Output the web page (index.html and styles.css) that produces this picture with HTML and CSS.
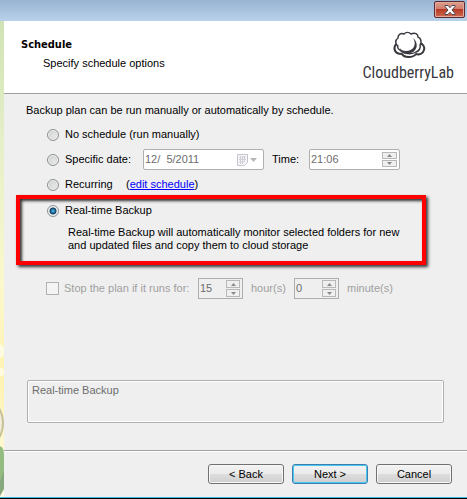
FILE: index.html
```html
<!DOCTYPE html>
<html lang="en">
  <head>
    <meta charset="utf-8" />
    <meta name="viewport" content="width=device-width, initial-scale=1.0" />
    <title>Schedule</title>
    <link rel="stylesheet" href="styles.css">
  </head>
  <body>
    <div class="window">
      <div class="titlebar">
        <button type="button" class="close" aria-label="Close">
          <svg width="12" height="10" viewBox="0 0 12 10">
            <path d="M1 .5h3l2 2.2 2-2.2h3v1L8 5l3 3.500v1H8L6 7.300 4 9.500H1v-1L4 5 1 1.500z" fill="#fff" stroke="#4b4558" stroke-width="1" />
          </svg>
        </button>
      </div>
      <div class="content">
        <svg class="backdrop" width="4" height="475" viewBox="0 0 4 475">
          <circle cx="-2" cy="330" r="7" fill="#fffbe0" />
          <circle cx="-1" cy="351" r="5" fill="#fffbe0" />
          <circle cx="-26" cy="402" r="29" fill="#f2edd6" stroke="#c6c09c" stroke-width="2" />
          <path d="M0 425q4 2 4 8v33l-4 4z" fill="#93bd80" />
          <path d="M0 460l4-10v18l-4 7z" fill="#86a87c" />
        </svg>
        <form class="wizard">
          <header>
            <div class="heading">
              <h1>Schedule</h1>
              <p>Specify schedule options</p>
            </div>
            <div class="logo">
              <svg width="38" height="28" viewBox="0 0 38 28" fill="#fff" stroke="#38383e" stroke-linejoin="round">
                <path d="M9 12c-4 2-5 7-1 10 2 1 4 1 5 1 2 4 11 4 14 0 3 1 7 0 8-4 1-3-1-6-4-7z" stroke-width="2" />
                <path d="M11 19c-2-1-3-3-2-4-3-2-3-6 0-8 0-4 3-5 6-4 2-2 5-2 7 0 4-2 7 0 7 3 3 1 4 5 2 8 1 3-1 6-4 7-3 2-12 3-16-2z" stroke-width="1.500" />
                <path d="M24 7c4 6 1 13-7 13-3 0-5-1-6-3 1 6 12 7 15 2 3-3 2-9-2-12z" fill="#38383e" stroke="none" />
              </svg>
              <span>CloudberryLab</span>
            </div>
          </header>
          <main>
            <p class="intro">Backup plan can be run manually or automatically by schedule.</p>
            <div class="options">
              <div class="row">
                <input type="radio" name="schedule" id="none" />
                <label for="none">No schedule (run manually)</label>
              </div>
              <div class="row">
                <input type="radio" name="schedule" id="specific" />
                <label for="specific" class="date-label">Specific date:</label>
                <div class="field date">
                  <input type="text" value="12/  5/2011" aria-label="Date" disabled />
                  <button type="button" class="picker" aria-label="Open calendar" disabled>
                    <svg width="22" height="14" viewBox="0 0 22 14">
                      <path d="M1.500 1.500h10v8l-3 3h-7z" fill="#f7f7f9" stroke="#c4c4cc" />
                      <path d="M3 4h7M3 6.500h7M3 9h5M4.500 3v8M6.500 3v8M8.500 3v6" stroke="#d0d0d8" />
                      <path d="M14 5h7l-3.500 4z" fill="#b5b5b5" />
                    </svg>
                  </button>
                </div>
                <label for="time" class="time-label">Time:</label>
                <div class="field time">
                  <input type="text" id="time" value="21:06" disabled />
                  <span class="spinner">
                    <button type="button" aria-label="Later" disabled><svg width="5" height="3" viewBox="0 0 5 3"><path d="M0 3h5L2.500 0z" /></svg></button>
                    <button type="button" aria-label="Earlier" disabled><svg width="5" height="3" viewBox="0 0 5 3"><path d="M0 0h5L2.500 3z" /></svg></button>
                  </span>
                </div>
              </div>
              <div class="row">
                <input type="radio" name="schedule" id="recurring" />
                <label for="recurring" class="recurring-label">Recurring</label>
                <span class="edit">(<a href="#">edit schedule</a>)</span>
              </div>
            </div>
            <div class="highlight">
              <div class="row">
                <input type="radio" name="schedule" id="realtime" checked />
                <label for="realtime">Real-time Backup</label>
              </div>
              <p>Real-time Backup will automatically monitor selected folders for new<br>and updated files and copy them to cloud storage</p>
            </div>
            <div class="row stop">
              <input type="checkbox" id="stop" disabled />
              <label for="stop" class="stop-label">Stop the plan if it runs for:</label>
              <div class="field number">
                <input type="text" id="hours" value="15" disabled />
                <span class="spinner">
                  <button type="button" aria-label="More hours" disabled><svg width="5" height="3" viewBox="0 0 5 3"><path d="M0 3h5L2.500 0z" /></svg></button>
                  <button type="button" aria-label="Fewer hours" disabled><svg width="5" height="3" viewBox="0 0 5 3"><path d="M0 0h5L2.500 3z" /></svg></button>
                </span>
              </div>
              <label for="hours" class="hours-label">hour(s)</label>
              <div class="field number">
                <input type="text" id="minutes" value="0" disabled />
                <span class="spinner">
                  <button type="button" aria-label="More minutes" disabled><svg width="5" height="3" viewBox="0 0 5 3"><path d="M0 3h5L2.500 0z" /></svg></button>
                  <button type="button" aria-label="Fewer minutes" disabled><svg width="5" height="3" viewBox="0 0 5 3"><path d="M0 0h5L2.500 3z" /></svg></button>
                </span>
              </div>
              <label for="minutes" class="minutes-label">minute(s)</label>
            </div>
            <textarea class="summary" aria-label="Summary" disabled>Real-time Backup</textarea>
          </main>
          <footer>
            <button type="button">&lt; Back</button>
            <button type="submit" class="default">Next &gt;</button>
            <button type="button">Cancel</button>
          </footer>
        </form>
      </div>
    </div>
  </body>
</html>
```
FILE: styles.css
```css
:root {
  --face: #efefef;
  --line: #a0a0a0;
  --disabled: #6d6d6d;
  --muted: #a0a0a0;
}

* {
  box-sizing: border-box;
}

body {
  margin: 0;
  font-family: Tahoma, "Liberation Sans", sans-serif;
  font-size: 11px;
  line-height: 13px;
  color: #000;
}

h1,
p {
  margin: 0;
}

input,
button,
textarea {
  margin: 0;
  font: inherit;
  color: inherit;
}

.window {
  display: flex;
  flex-direction: column;
  min-height: 100vh;
  border-bottom: 1px solid #000;
}

.titlebar {
  display: flex;
  justify-content: flex-end;
  height: 21px;
  padding: 1px 2px 0 0;
  background: linear-gradient(#98b4d2, #b9d1ea);
}

.close {
  display: flex;
  align-items: center;
  justify-content: center;
  width: 31px;
  height: 17px;
  padding: 0;
  border: 1px solid #5c2a2c;
  border-radius: 2px;
  background: linear-gradient(#dfa08f, #cf7a68 48%, #b73a24 50%, #cd6a50);
  box-shadow: inset 0 0 0 1px #e2aa9c;
}

.content {
  display: flex;
  flex: 1;
  border-bottom: 1px solid #3cb8dc;
  background: linear-gradient(#d0e3b4, #e5efc8 25%, #fbf8cd 55%, #fff3b0 75%, #fffbe8);
}

.backdrop {
  flex: none;
}

.wizard {
  display: flex;
  flex: 1;
  flex-direction: column;
  background: var(--face);
}

header {
  display: flex;
  justify-content: space-between;
  height: 73px;
  padding: 10px 13px 0 17px;
  border-bottom: 1px solid var(--line);
  background: #fff;
}

.heading {
  padding-top: 7px;
}

h1 {
  font-family: Tahoma, "DejaVu Sans Condensed", sans-serif;
  font-size: 11px;
}

.heading p {
  padding: 6px 0 0 22px;
}

.logo {
  display: flex;
  flex-direction: column;
  align-items: center;
  color: #38383e;
  font-family: "Roboto Condensed", Roboto, sans-serif;
  font-size: 16px;
  line-height: 28px;
}

main {
  flex: 1;
  padding: 10px 24px 0 22px;
}

.options {
  display: flex;
  flex-direction: column;
  gap: 4px;
  padding: 7px 0 0 21px;
}

.row {
  display: flex;
  align-items: center;
  height: 21px;
  white-space: nowrap;
}

input[type="radio"] {
  appearance: none;
  flex: none;
  width: 12px;
  height: 12px;
  margin-right: 6px;
  border: 1px solid #8e8f8f;
  border-radius: 50%;
  background: radial-gradient(circle at 60% 60%, #e8e8e8, #c4c7ca);
  box-shadow: inset 0 0 0 1px #f4f4f4;
}

input[type="radio"]:checked {
  background: radial-gradient(circle, #5cc4ee 0, #1b6c9c 2px, #123c5a 3px, #e4e8ea 4px);
}

input[type="checkbox"] {
  appearance: none;
  flex: none;
  width: 13px;
  height: 13px;
  margin-right: 5px;
  border: 1px solid #b1b1b1;
  background: #f4f4f4;
}

.date-label {
  width: 78px;
}

.time-label {
  width: 37px;
  margin-left: 8px;
}

.recurring-label {
  width: 61px;
}

.field {
  display: flex;
  align-items: center;
  height: 21px;
  padding-right: 2px;
  border: 1px solid #afafaf;
  border-radius: 2px;
  background: #fff;
}

.field input {
  flex: 1;
  width: 0;
  min-width: 0;
  padding: 0 0 0 1px;
  border: 0;
  background: none;
  color: var(--disabled);
  white-space: pre;
}

.date {
  width: 121px;
}

.time {
  width: 91px;
}

.number {
  width: 45px;
  border-radius: 0;
  background: var(--face);
}

.picker {
  display: flex;
  padding: 0 3px 0 0;
  border: 0;
  background: none;
}

.spinner {
  display: flex;
  flex-direction: column;
  gap: 1px;
}

.spinner button {
  display: flex;
  align-items: center;
  justify-content: center;
  width: 15px;
  height: 7px;
  padding: 0;
  border: 1px solid #b8b8b8;
  background: var(--face);
}

.number .spinner button {
  width: 14px;
  height: 8px;
}

.spinner path {
  fill: #8a8a8a;
}

.edit {
  font-family: "Liberation Sans", Arial, sans-serif;
  font-size: 11px;
}

.edit a {
  color: #00f;
}

.highlight {
  margin: 0 -6px 0 -10px;
  padding: 1px 0 9px 27px;
  width: 410px;
  max-width: 100%;
  border: 4px solid #f00;
  box-shadow: 2px 2px 3px #333, inset 2px 2px 3px #333;
}

.highlight p {
  padding: 5px 0 0 21px;
  white-space: nowrap;
}

.stop {
  margin: 13px 0 0 20px;
  color: var(--muted);
}

.stop-label {
  width: 134px;
}

.hours-label {
  width: 43px;
  margin-left: 8px;
}

.minutes-label {
  margin-left: 8px;
}

.summary {
  display: block;
  width: 100%;
  height: 43px;
  margin: 81px 0 0 1px;
  padding: 3px 4px;
  border: 1px solid #afafaf;
  border-radius: 2px;
  box-shadow: inset 0 0 0 1px #fff;
  background: var(--face);
  color: var(--disabled);
  resize: none;
}

footer {
  display: flex;
  justify-content: flex-end;
  gap: 8px;
  padding: 13px 15px;
  border-top: 1px solid var(--line);
  box-shadow: inset 0 1px 0 #fff;
}

footer button {
  width: 76px;
  height: 20px;
  padding: 0;
  border: 1px solid #707070;
  border-radius: 3px;
  background: linear-gradient(#f2f2f2, #ebebeb 48%, #dddddd 50%, #cfcfcf);
  box-shadow: inset 0 0 0 1px #f8f8f8;
}

footer .default {
  border-color: #3c7fb1;
  box-shadow: inset 0 0 0 1px #48c8f0;
}
```
